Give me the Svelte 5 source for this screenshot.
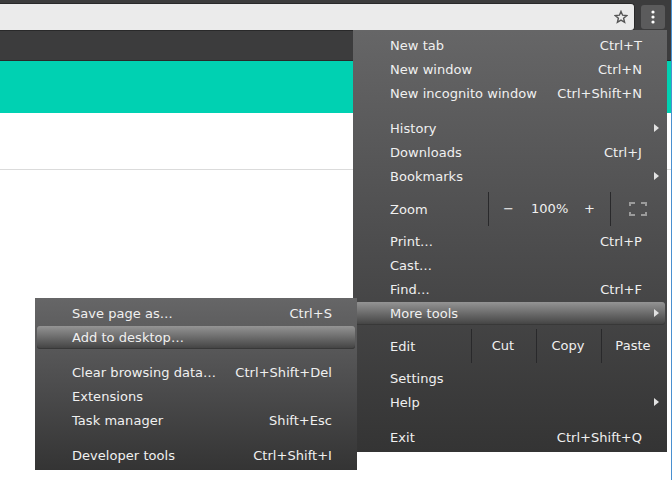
<script>
  const main = [
    { label: 'New tab', key: 'Ctrl+T' },
    { label: 'New window', key: 'Ctrl+N' },
    { label: 'New incognito window', key: 'Ctrl+Shift+N' },
    { type: 'gap' },
    { label: 'History', arrow: true },
    { label: 'Downloads', key: 'Ctrl+J' },
    { label: 'Bookmarks', arrow: true },
    { type: 'zoom', label: 'Zoom' },
    { label: 'Print…', key: 'Ctrl+P' },
    { label: 'Cast…' },
    { label: 'Find…', key: 'Ctrl+F' },
    { label: 'More tools', arrow: true, active: true },
    { type: 'edit', label: 'Edit' },
    { label: 'Settings' },
    { label: 'Help', arrow: true },
    { type: 'gap' },
    { label: 'Exit', key: 'Ctrl+Shift+Q' }
  ];
  const tools = [
    { label: 'Save page as…', key: 'Ctrl+S' },
    { label: 'Add to desktop…', active: true },
    { type: 'gap' },
    { label: 'Clear browsing data…', key: 'Ctrl+Shift+Del' },
    { label: 'Extensions' },
    { label: 'Task manager', key: 'Shift+Esc' },
    { type: 'gap' },
    { label: 'Developer tools', key: 'Ctrl+Shift+I' }
  ];
</script>

{#snippet rows(items)}
  {#each items as item}
    {#if item.type === 'gap'}
      <div class="gap"></div>
    {:else if item.type === 'zoom'}
      <div class="tall">
        <span class="name">{item.label}</span>
        <div class="cell zoom">
          <span class="minus">−</span><span class="level">100%</span><span class="plus">+</span>
        </div>
        <div class="cell full">
          <svg width="18" height="14" viewBox="0 0 18 14" fill="none" stroke="#9b9b9b" stroke-width="2">
            <path d="M1 4V1H6M12 1H17V4M17 10V13H12M6 13H1V10" />
          </svg>
        </div>
      </div>
    {:else if item.type === 'edit'}
      <div class="tall">
        <span class="name short">{item.label}</span>
        <div class="cell action">Cut</div>
        <div class="cell action">Copy</div>
        <div class="cell action">Paste</div>
      </div>
    {:else}
      <div class="row" class:active={item.active}>
        <span>{item.label}</span>
        {#if item.key}<span class="key">{item.key}</span>{/if}
        {#if item.arrow}
          <svg class="arrow" width="5" height="8" viewBox="0 0 5 8"><path d="M0 0L5 4L0 8Z" fill="#e2e2e2" /></svg>
        {/if}
      </div>
    {/if}
  {/each}
{/snippet}

<div class="screen">
  <div class="toolbar">
    <div class="address">
      <svg width="14" height="14" viewBox="0 0 14 14" fill="none" stroke="#555" stroke-width="1.4">
        <path d="M7 1.4L8.6 5.2L12.8 5.5L9.6 8.2L10.6 12.3L7 10.1L3.4 12.3L4.4 8.2L1.2 5.5L5.4 5.2Z" />
      </svg>
    </div>
    <div class="more">
      <svg width="4" height="14" viewBox="0 0 4 14" fill="#fff">
        <circle cx="2" cy="2" r="1.6" /><circle cx="2" cy="7" r="1.6" /><circle cx="2" cy="12" r="1.6" />
      </svg>
    </div>
  </div>
  <div class="bookmarks"></div>
  <div class="banner"></div>
  <div class="page"></div>
  <div class="edge"></div>

  <div class="menu main">{@render rows(main)}</div>
  <div class="menu sub">{@render rows(tools)}</div>
</div>

<style>
  .screen {
    position: relative;
    width: 672px;
    height: 480px;
    overflow: hidden;
    background: #fff;
    font: 13px/24px 'DejaVu Sans', sans-serif;
    letter-spacing: 0.04px;
    color: #f0f0f0;
  }
  .toolbar {
    display: flex;
    height: 31px;
    box-sizing: border-box;
    padding-top: 3px;
    gap: 6px;
    background: #3c3c3d;
  }
  .address {
    width: 635px;
    height: 28px;
    box-sizing: border-box;
    border: solid #29292a;
    border-width: 1px 1px 1px 0;
    border-radius: 0 4px 4px 0;
    background: #ebebeb;
    display: flex;
    align-items: center;
    justify-content: flex-end;
    padding-right: 6px;
  }
  .more {
    width: 24px;
    height: 24px;
    margin-top: 2px;
    border-radius: 3px;
    background: #5b5b5c;
    display: flex;
    align-items: center;
    justify-content: center;
  }
  .bookmarks {
    height: 30px;
    box-sizing: border-box;
    background: #3c3c3d;
    border-bottom: 1px solid #29292a;
  }
  .banner {
    height: 52px;
    background: #00d1b2;
  }
  .page {
    height: 56px;
    border-bottom: 1px solid #dbdbdb;
  }
  .edge {
    position: absolute;
    right: 0;
    top: 0;
    width: 1px;
    height: 480px;
    background: #4a90d0;
  }
  .menu {
    position: absolute;
    box-sizing: border-box;
    padding: 3px 0;
    background: linear-gradient(#666667, #4d4d4e 50%, #343434);
  }
  .main {
    left: 353px;
    top: 30px;
    width: 314px;
    height: 422px;
  }
  .sub {
    left: 35px;
    top: 298px;
    width: 322px;
    height: 172px;
  }
  .row {
    position: relative;
    display: flex;
    justify-content: space-between;
    height: 24px;
    box-sizing: border-box;
    padding: 1px 25px 0 37px;
    white-space: nowrap;
  }
  .row > span {
    position: relative;
  }
  .active::before {
    content: '';
    position: absolute;
    inset: 1px 2px 0;
    border-radius: 3px;
    background: linear-gradient(#949494, #414141);
    box-shadow: inset 0 -1px #383838;
  }
  .arrow {
    position: absolute;
    right: 8px;
    top: 8px;
  }
  .gap {
    height: 11px;
  }
  .tall {
    display: flex;
    height: 41px;
    box-sizing: border-box;
    padding: 4px 0 3px 37px;
    line-height: 34px;
  }
  .name {
    width: 98px;
    line-height: 36px;
  }
  .short {
    width: 81px;
  }
  .cell {
    height: 34px;
    box-sizing: border-box;
    border-left: 1px solid #29292b;
    line-height: 33px;
  }
  .zoom {
    display: flex;
    width: 122px;
  }
  .minus {
    width: 42px;
    padding-left: 14px;
    box-sizing: border-box;
  }
  .level {
    width: 53px;
  }
  .full {
    width: 57px;
    box-sizing: border-box;
    padding-right: 2px;
    display: flex;
    align-items: center;
    justify-content: center;
  }
  .action {
    width: 65px;
    padding-right: 2px;
    text-align: center;
  }
</style>
